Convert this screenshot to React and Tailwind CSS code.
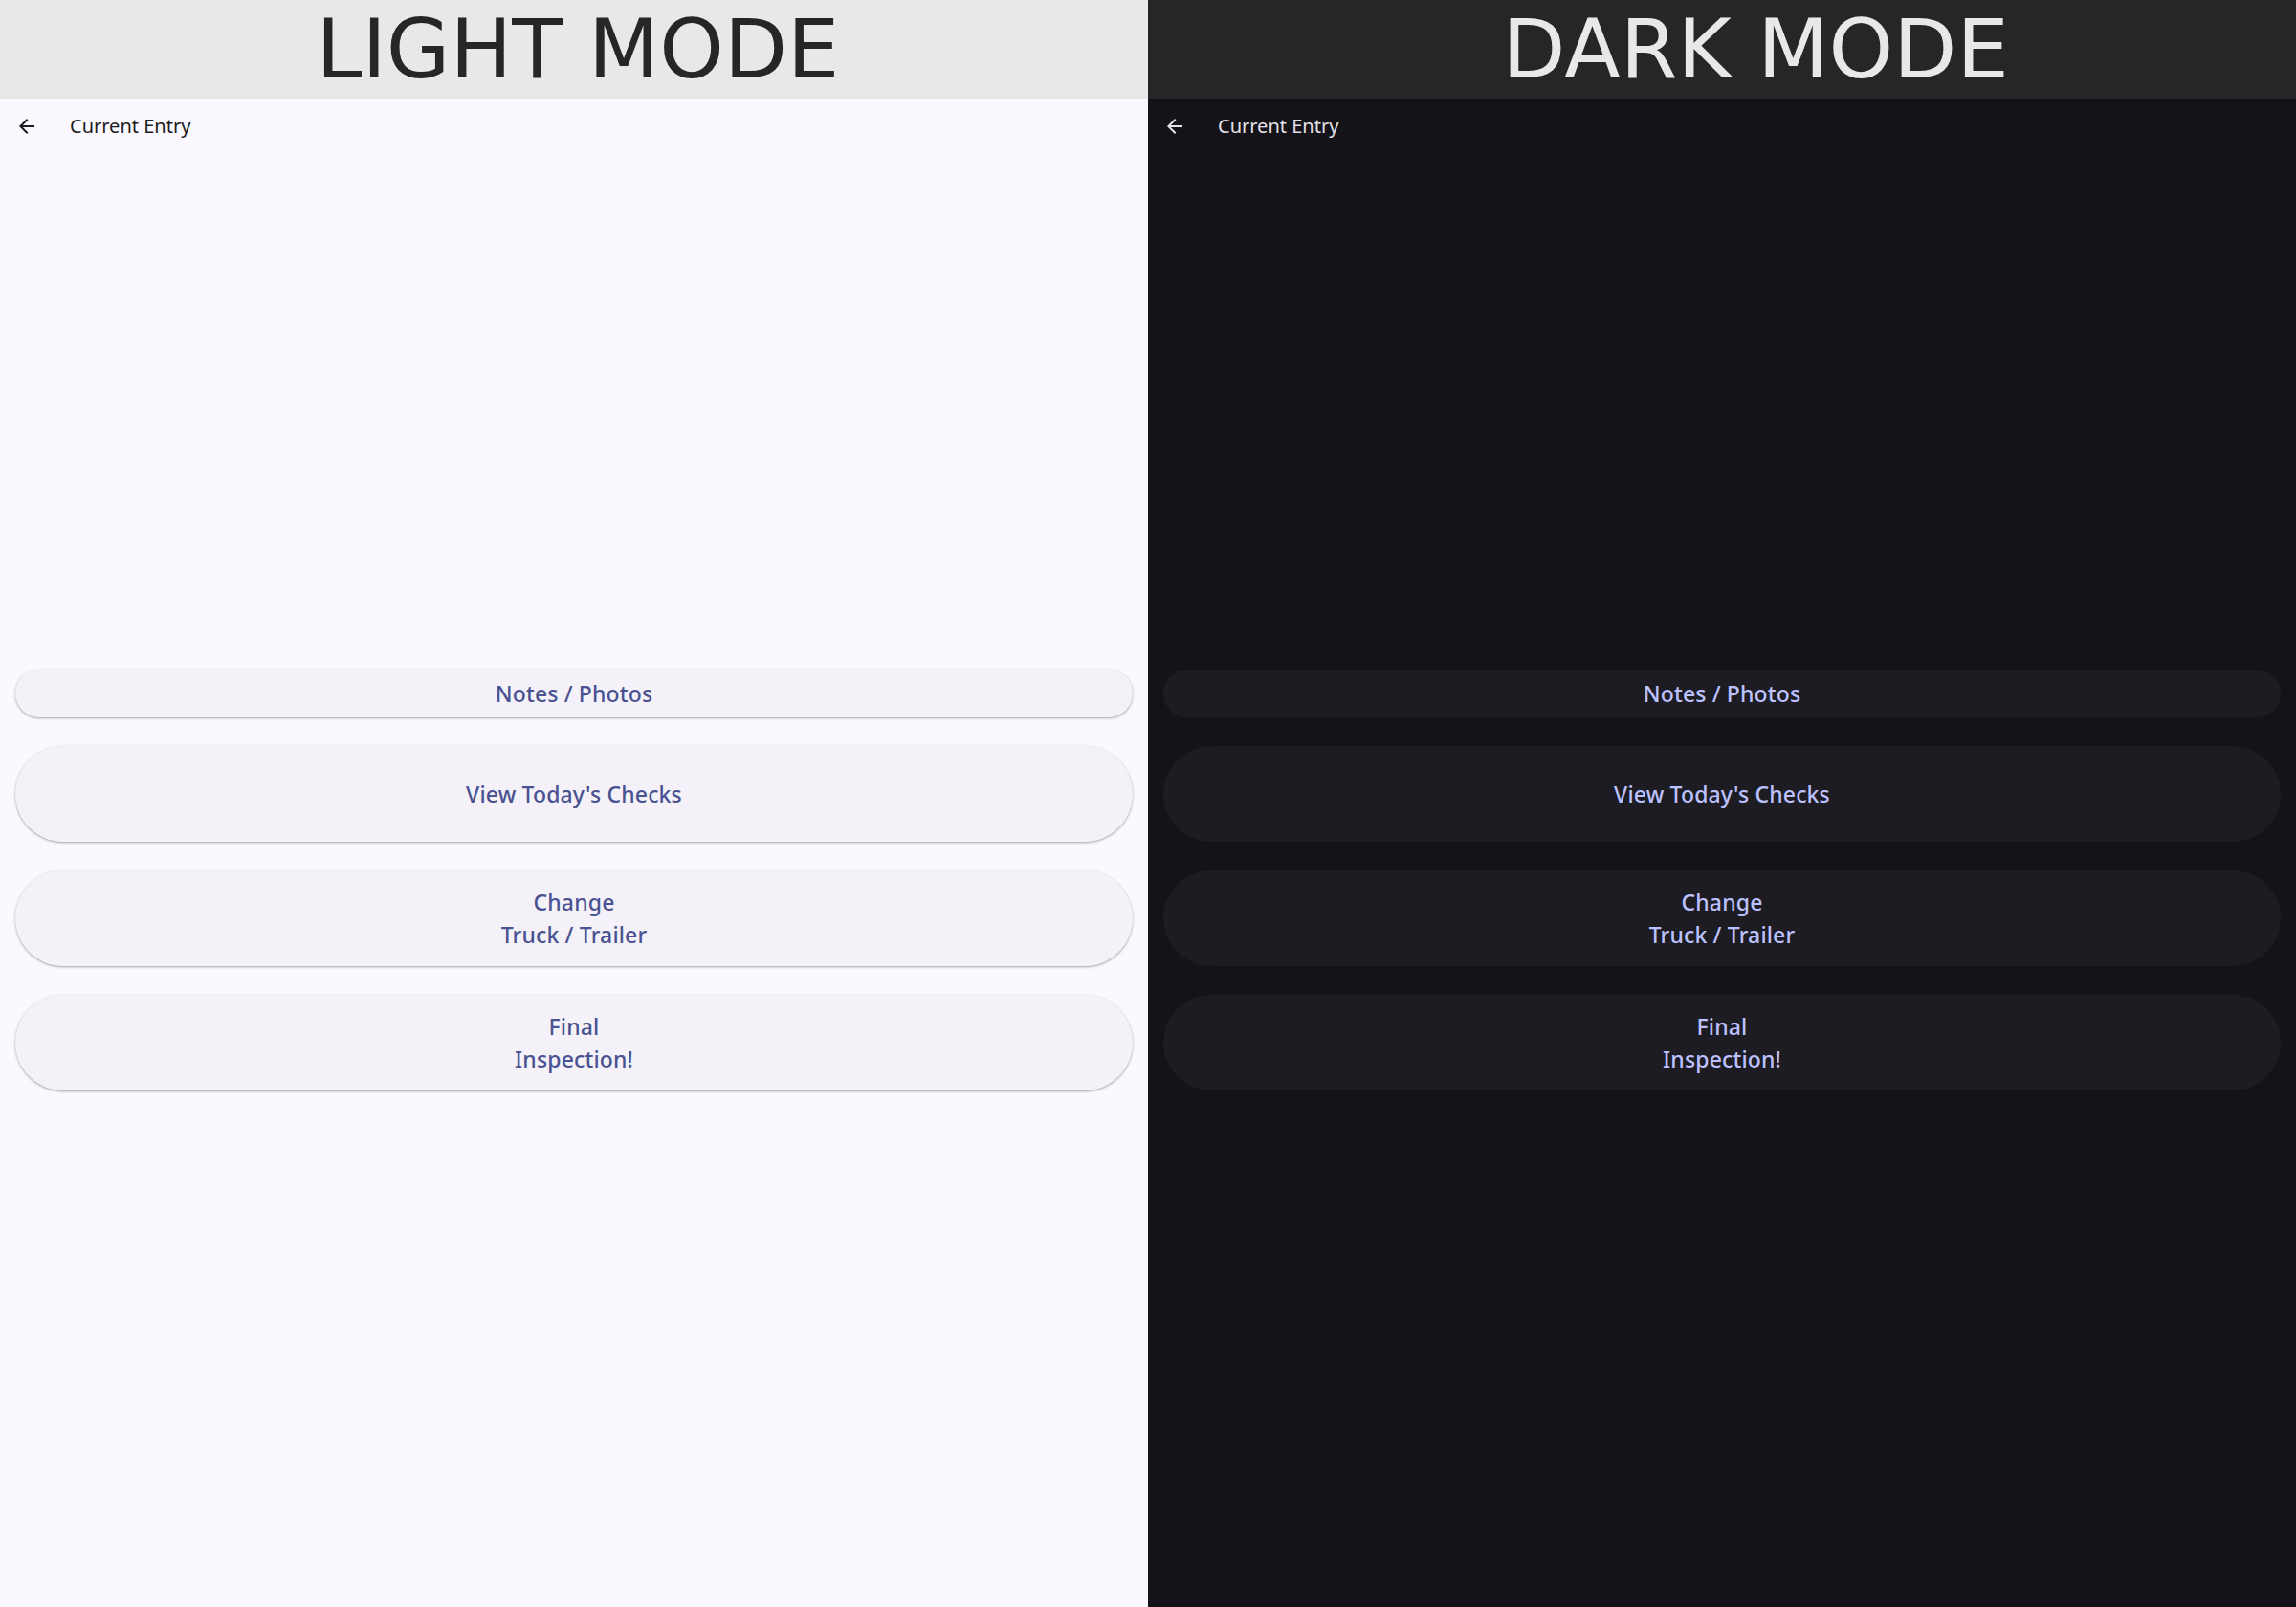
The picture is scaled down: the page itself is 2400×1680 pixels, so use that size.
import React from "react";

function BackArrow({ color }) {
  return (
    <svg width="24" height="24" viewBox="0 0 24 24" fill={color}>
      <path d="M20 11H7.83l5.59-5.59L12 4l-8 8 8 8 1.41-1.41L7.83 13H20v-2z" />
    </svg>
  );
}

function Panel({ dark }) {
  const buttons = [
    { lines: ["Notes / Photos"], h: "h-[50px]" },
    { lines: ["View Today's Checks"], h: "h-[100px]" },
    { lines: ["Change", "Truck / Trailer"], h: "h-[100px]" },
    { lines: ["Final", "Inspection!"], h: "h-[100px]" },
  ];
  return (
    <div className={`flex flex-col w-[1200px] h-[1680px] ${dark ? "bg-[#141318]" : "bg-[#fbf8ff]"}`}>
      <div
        className={`h-[104px] flex items-center justify-center ${
          dark ? "bg-[#262626] text-[#e8e8e8] pl-[70px]" : "bg-[#e8e8e8] text-[#262626] pl-[8px]"
        }`}
      >
        <span className="text-[86px] leading-[1.2] font-['DejaVu_Sans',sans-serif]">
          {dark ? "DARK MODE" : "LIGHT MODE"}
        </span>
      </div>
      <div className="h-[56px] flex items-center pl-[16px]">
        <BackArrow color={dark ? "#e4e1e9" : "#1b1b21"} />
        <span
          className={`ml-[33px] text-[20px] font-['Noto_Sans',sans-serif] ${dark ? "text-[#e4e1e9]" : "text-[#1b1b21]"}`}
        >
          Current Entry
        </span>
      </div>
      <div className="flex-1 flex flex-col justify-center px-4 gap-[30px]">
        {buttons.map((b, i) => (
          <div
            key={i}
            className={`${b.h} rounded-full flex flex-col items-center justify-center font-['Noto_Sans',sans-serif] font-medium text-[23px] leading-[34px] tracking-[0.15px] ${
              dark
                ? "bg-[#1d1c22] text-[#bcc2ff]"
                : "bg-[#f4f2f8] text-[#4a5291] shadow-[0_1px_2px_rgba(0,0,0,0.25),0_1px_3px_1px_rgba(0,0,0,0.08)]"
            }`}
          >
            {b.lines.map((l, j) => (
              <span key={j}>{l}</span>
            ))}
          </div>
        ))}
      </div>
    </div>
  );
}

export default function App() {
  return (
    <div className="flex w-[2400px] h-[1680px] overflow-hidden">
      <Panel dark={false} />
      <Panel dark={true} />
    </div>
  );
}
